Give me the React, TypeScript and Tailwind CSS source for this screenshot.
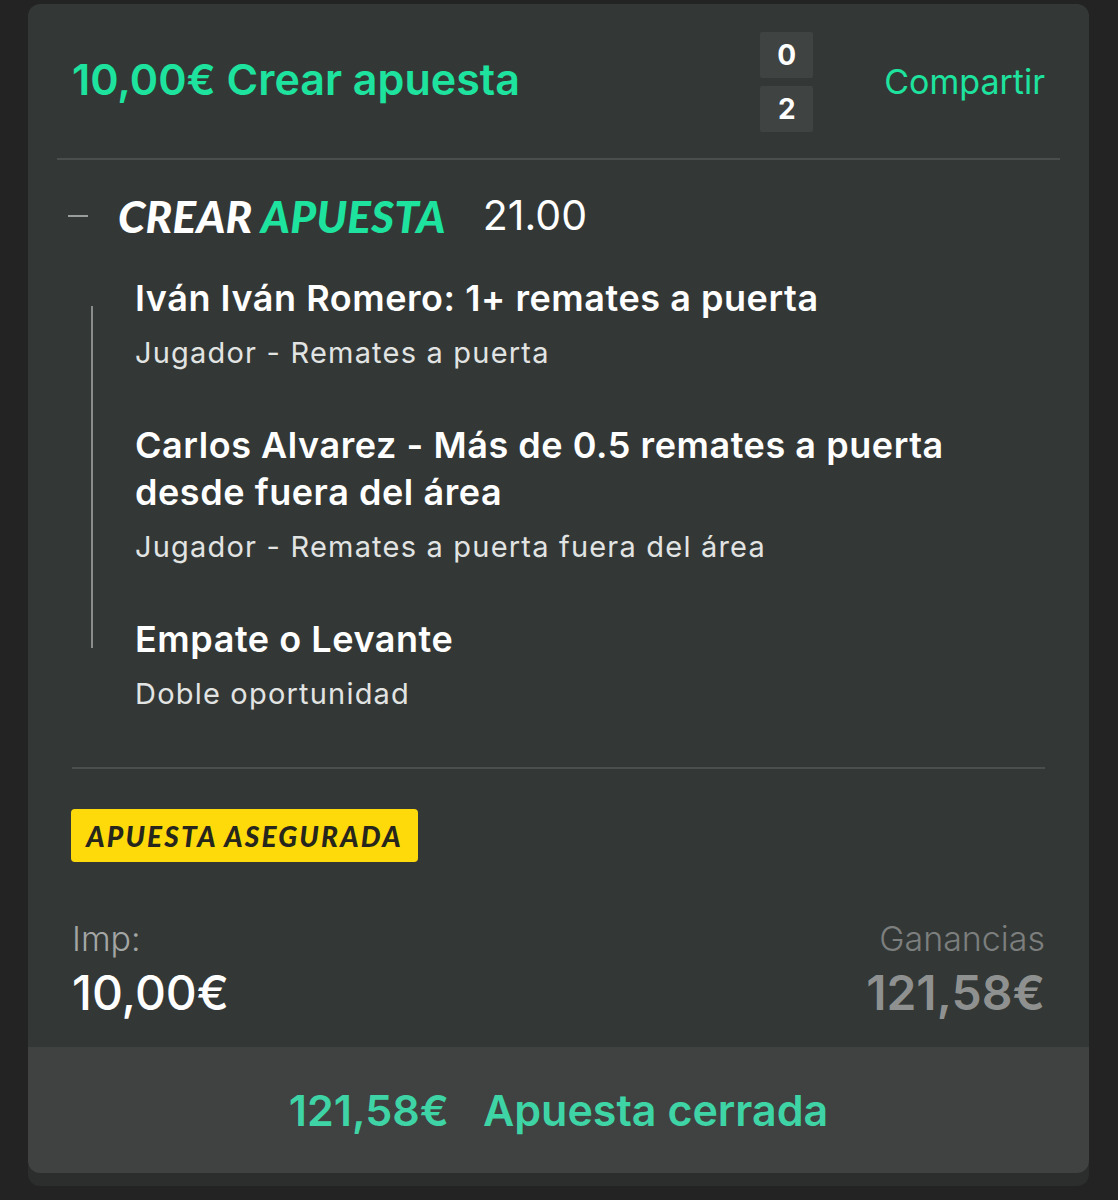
import React from "react";

const sans = { fontFamily: "Inter, 'Noto Sans', sans-serif" } as const;
const heavy = { fontFamily: "Lato, 'Noto Sans', sans-serif" } as const;

function Item({ title, sub }: { title: React.ReactNode; sub: string }) {
  return (
    <div className="flex flex-col">
      <div className="text-[36px] leading-[47px] font-semibold text-white tracking-[0.55px]">{title}</div>
      <div className="mt-[12px] text-[29px] leading-[38px] text-[#e2e4e3] tracking-[1.2px]">{sub}</div>
    </div>
  );
}

export default function App() {
  return (
    <div className="min-h-[1200px] w-[1118px] bg-[#232323] pt-[4px] pl-[28px]" style={sans}>
      <div className="w-[1061px] rounded-[12px] bg-[#2c2e2d] pb-[13px] overflow-hidden">
        <div className="rounded-[12px] bg-[#333836] overflow-hidden">
          {/* header */}
          <div className="flex items-start px-[44px] pt-[28px] h-[154px]">
            <div className="pt-[23px] text-[43px] leading-[48px] font-semibold text-[#1ee39f]">10,00€ Crear apuesta</div>
            <div className="ml-auto flex flex-col gap-[8px] mr-[71px]">
              <div className="w-[53px] h-[46px] rounded-[2px] bg-[#3f4341] flex items-center justify-center text-[28px] font-bold text-white">0</div>
              <div className="w-[53px] h-[46px] rounded-[2px] bg-[#3f4341] flex items-center justify-center text-[28px] font-bold text-white">2</div>
            </div>
            <div className="pt-[26px] text-[34px] leading-[48px] text-[#1ee39f]">Compartir</div>
          </div>
          <div className="mx-[29px] h-[2px] bg-[#4a4e4c]" />
          {/* title row */}
          <div className="flex items-center pl-[40px] pt-[27px] h-[85px]">
            <div className="w-[20px] h-[2px] bg-[#9a9d9c]" />
            <div className="ml-[30px] text-[44px] font-black italic tracking-[0.3px]" style={heavy}>
              <span className="text-white">CREAR </span>
              <span className="text-[#1ee39f]">APUESTA</span>
            </div>
            <div className="ml-[37px] text-[41px] text-white">21.00</div>
          </div>
          {/* selections */}
          <div className="flex pl-[63px] pt-[30px]">
            <div className="mt-[31px] w-[2px] h-[342px] bg-[#8a8d8c]" />
            <div className="ml-[42px] flex flex-col gap-[50px]">
              <Item title="Iván Iván Romero: 1+ remates a puerta" sub="Jugador - Remates a puerta" />
              <Item
                title={<>Carlos Alvarez - Más de 0.5 remates a puerta<br />desde fuera del área</>}
                sub="Jugador - Remates a puerta fuera del área"
              />
              <Item title="Empate o Levante" sub="Doble oportunidad" />
            </div>
          </div>
          <div className="mx-[44px] mt-[54px] h-[2px] bg-[#4a4e4c]" />
          {/* badge */}
          <div className="px-[43px] pt-[40px]">
            <div className="inline-flex h-[53px] w-[347px] items-center justify-center rounded-[4px] bg-[#ffda0a] text-[#26261c] text-[28px] font-black italic tracking-[2.2px]" style={heavy}>
              APUESTA ASEGURADA
            </div>
          </div>
          {/* amounts */}
          <div className="flex justify-between px-[44px] pt-[57px] pb-[26px]">
            <div className="flex flex-col">
              <div className="text-[34px] leading-[40px] font-light text-[#a3a6a5]">Imp:</div>
              <div className="mt-[6px] text-[48px] leading-[56px] font-medium text-white">10,00€</div>
            </div>
            <div className="flex flex-col items-end">
              <div className="text-[34px] leading-[40px] font-light text-[#7c7f7e]">Ganancias</div>
              <div className="mt-[6px] text-[48px] leading-[56px] font-semibold text-[#8f9190]">121,58€</div>
            </div>
          </div>
          {/* bottom bar */}
          <div className="h-[126px] bg-[#3f4241] flex items-center justify-center rounded-b-[12px] text-[43px] font-semibold text-[#3fd4a5]">
            <span>121,58€</span>
            <span className="ml-[34px]">Apuesta cerrada</span>
          </div>
        </div>
      </div>
    </div>
  );
}
